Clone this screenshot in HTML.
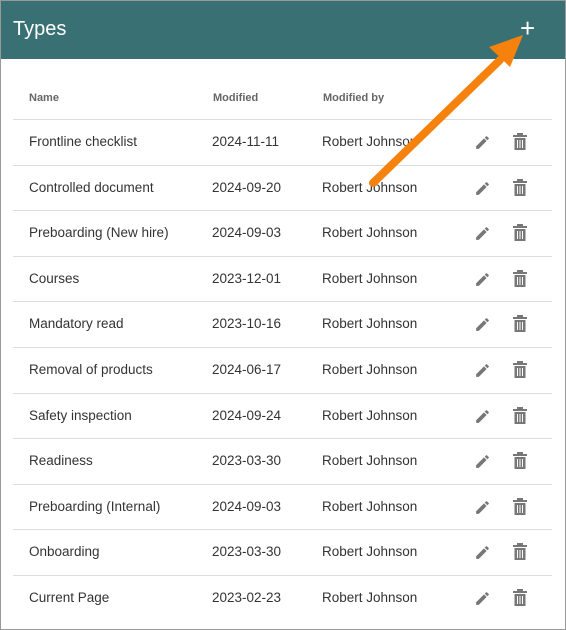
<!DOCTYPE html>
<html><head><style>
body{margin:0;width:566px;height:630px;overflow:hidden;font-family:"Liberation Sans",sans-serif;background:#fff}
.frame{position:absolute;left:0;top:0;width:564px;height:628px;border:1px solid #999}
.hdr{position:absolute;left:1px;top:1px;width:564px;height:58px;background:#387074;color:#fff}
.hdr .t{position:absolute;left:12px;top:17px;font-size:20px}
.hdr .p{position:absolute;left:519px;top:12px;font-size:26px}
.th{position:absolute;top:92px;font-size:11px;font-weight:bold;color:#666}
.row{position:absolute;left:13px;width:539px;height:45.6px;border-top:1px solid #ddd;font-size:13.5px;color:#333}
.row span{position:absolute;top:14px}
</style></head><body>
<div class="frame"></div>
<div class="hdr"><div class="t">Types</div><div class="p">+</div></div>
<div class="th" style="left:29px">Name</div>
<div class="th" style="left:213px">Modified</div>
<div class="th" style="left:323px">Modified by</div>
<div id="rows"></div>
<script>
const d=[["Frontline checklist","2024-11-11"],["Controlled document","2024-09-20"],["Preboarding (New hire)","2024-09-03"],["Courses","2023-12-01"],["Mandatory read","2023-10-16"],["Removal of products","2024-06-17"],["Safety inspection","2024-09-24"],["Readiness","2023-03-30"],["Preboarding (Internal)","2024-09-03"],["Onboarding","2023-03-30"],["Current Page","2023-02-23"]];
let h="";
d.forEach((r,i)=>{const y=119+i*45.6;
h+=`<div class="row" style="top:${y}px"><span style="left:16px">${r[0]}</span><span style="left:199px">${r[1]}</span><span style="left:309px">Robert Johnson</span>
<svg style="position:absolute;left:461px;top:14px" width="17" height="17" viewBox="0 0 24 24"><path fill="#777" d="M3 17.25V21h3.75L17.81 9.94l-3.75-3.75L3 17.25zM20.71 7.04a1 1 0 000-1.41l-2.34-2.34a1 1 0 00-1.41 0l-1.83 1.83 3.75 3.75 1.83-1.83z"/></svg>
<svg style="position:absolute;left:499px;top:13px" width="16" height="17" viewBox="0 0 16 17"><rect x="1" y="2" width="14" height="2" fill="#777"/><rect x="5" y="0" width="6" height="2" fill="#777"/><path fill="#777" d="M2.5 5h11v12h-11z"/><path stroke="#fff" stroke-width="1" d="M5.5 7v8M8 7v8M10.5 7v8"/></svg></div>`});
document.getElementById("rows").innerHTML=h;
</script>
<svg style="position:absolute;left:0;top:0" width="566" height="630"><line x1="373" y1="183" x2="500" y2="60" stroke="#f5820d" stroke-width="8" stroke-linecap="round"/><polygon points="523,35 489,47 510,67" fill="#f5820d"/></svg>
</body></html>
